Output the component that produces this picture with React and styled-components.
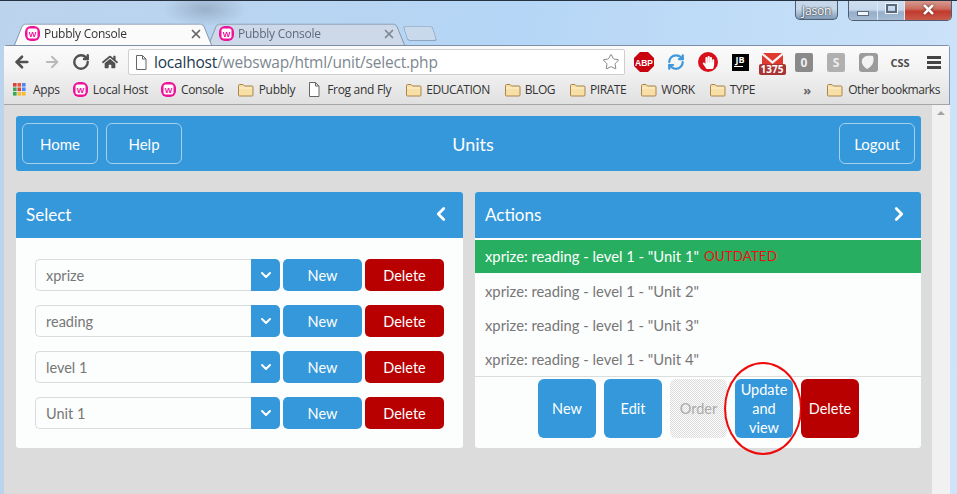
import React from 'react';
import styled, { createGlobalStyle } from 'styled-components';
import { ArrowLeft, ArrowRight, ChevronDown, ChevronLeft, ChevronRight, RefreshCw, RotateCw, Star, X } from 'lucide-react';
import { FaHome, FaHandPaper } from 'react-icons/fa';

const GlobalStyle = createGlobalStyle`
    html, body { margin: 0; padding: 0; background: #c6dcf3; }
    * { box-sizing: border-box; }
`;

const uiFont = `"Open Sans", "Noto Sans", sans-serif`;
const pageFont = `Lato, "Noto Sans", sans-serif`;

const Desktop = styled.div`
    width: 957px;
    height: 494px;
    overflow: hidden;
    display: flex;
    flex-direction: column;
    border-top: 1px solid #26323f;
    background:
        radial-gradient(ellipse 42px 18px at 205px 8px, rgba(120, 135, 155, 0.45), transparent),
        linear-gradient(100deg, #bcd3ec 0%, #b5d6f6 50%, #cfe4f9 100%);
`;

const TitleBar = styled.div`
    height: 44px;
    flex: none;
    display: flex;
    padding-left: 14px;
`;

const TabStrip = styled.div`
    display: flex;
    align-items: flex-end;
`;

const Tab = styled.div`
    position: relative;
    isolation: isolate;
    width: ${(p) => (p.$active ? 198 : 197)}px;
    height: 24px;
    margin-left: ${(p) => (p.$active ? 0 : -4)}px;
    padding: 1px 9px 0 11px;
    display: flex;
    align-items: center;
    gap: 4px;
    z-index: ${(p) => (p.$active ? 2 : 1)};
    font: 12px ${uiFont};
    letter-spacing: -0.25px;
    color: ${(p) => (p.$active ? '#333' : '#5f6b7c')};

    &::before {
        content: '';
        position: absolute;
        inset: 0;
        z-index: -1;
        background: ${(p) => (p.$active ? '#fbfbfb' : '#cdd8e8')};
        border: 1px solid #8296ad;
        border-bottom: none;
        border-radius: 4px 4px 0 0;
        transform: perspective(60px) rotateX(14deg);
        transform-origin: bottom;
    }
`;

const TabTitle = styled.span`
    flex: 1;
`;

const TabClose = styled(X)`
    color: ${(p) => (p.$active ? '#666' : '#7f8894')};
`;

const NewTab = styled.div`
    width: 30px;
    height: 15px;
    margin: 0 0 4px 0;
    background: #c9d9ec;
    border: 1px solid #8fa5bf;
    border-top-color: #a6b8cd;
    border-radius: 3px;
    transform: skewX(18deg);
`;

const WindowButtons = styled.div`
    margin-left: auto;
    margin-right: 5px;
    display: flex;
    align-items: flex-start;
    gap: 10px;
`;

const ProfileChip = styled.div`
    width: 43px;
    height: 19px;
    display: flex;
    align-items: center;
    justify-content: center;
    font: 12px ${uiFont};
    letter-spacing: -0.2px;
    color: #fff;
    text-shadow: 0 0 2px #26323f, 0 0 2px #26323f;
    background: linear-gradient(#c6d7e9 0%, #c6d7e9 45%, #7f99b6 100%);
    border: 1px solid #4f5e70;
    border-top: none;
    border-radius: 0 0 5px 5px;
`;

const Controls = styled.div`
    display: flex;
    height: 20px;
    border: 1px solid #4f5e70;
    border-top: none;
    border-radius: 0 0 5px 5px;
    overflow: hidden;
`;

const Control = styled.div`
    width: ${(p) => p.$w}px;
    display: flex;
    align-items: center;
    justify-content: center;
    border-right: 1px solid #dfe9f3;
    background: ${(p) =>
        p.$close
            ? 'linear-gradient(#d79a92 0%, #cb6d60 40%, #c23b2d 55%, #c95a4c 100%)'
            : 'linear-gradient(#cfdff0 0%, #c6d8ec 45%, #96aec8 60%, #a6bcd4 100%)'};
    &:last-child { border-right: none; }
`;

const MinGlyph = styled.span`
    width: 12px;
    height: 5px;
    margin-top: 6px;
    background: #f2f6fa;
    border: 1px solid #5a6b80;
`;

const MaxGlyph = styled.span`
    width: 11px;
    height: 9px;
    margin-bottom: 4px;
    border: 2px solid #5a6b80;
    box-shadow: 0 0 0 1px #eef3f8;
`;

const CloseGlyph = styled(X)`
    color: #fff;
    margin-bottom: 3px;
    filter: drop-shadow(0 0 1px #5a2018);
`;

const Browser = styled.div`
    flex: 1;
    min-height: 0;
    margin: 0 7px 0 4px;
    display: flex;
    flex-direction: column;
    border-top: 1px solid #7d8ea5;
    border-right: 1px solid #7d9cc0;
    border-radius: 3px 3px 0 0;
    background: #dcdcdc;
`;

const Chrome = styled.div`
    flex: none;
    background: linear-gradient(#fbfbfb 0%, #f3f3f3 40%, #e0e0e0 100%);
    border-bottom: 1px solid #a5a5a5;
`;

const Toolbar = styled.div`
    height: 29px;
    display: flex;
    align-items: center;
    padding: 3px 0 0 3px;
`;

const NavIcon = styled.div`
    width: ${(p) => p.$w || 29}px;
    flex: none;
    display: flex;
    justify-content: center;
    color: ${(p) => (p.$faded ? '#b9b9b9' : '#505050')};
`;

const Omnibox = styled.div`
    width: 497px;
    height: 26px;
    margin: 0 3px 0 4px;
    padding: 0 4px 0 6px;
    flex: none;
    display: flex;
    align-items: center;
    gap: 7px;
    background: #fff;
    border: 1px solid #cfcfcf;
    border-radius: 2px;
    font: 15.5px ${uiFont};
    letter-spacing: -0.2px;
    color: #7d8790;
`;

const Host = styled.span`
    color: #22384f;
`;

const Url = styled.span`
    flex: 1;
`;

const Extensions = styled.div`
    display: flex;
    align-items: center;
`;

const Extension = styled.div`
    width: 32px;
    height: 24px;
    flex: none;
    display: flex;
    align-items: center;
    justify-content: center;
`;

const HandBadge = styled.div`
    width: 20px;
    height: 20px;
    display: flex;
    align-items: center;
    justify-content: center;
    border-radius: 50%;
    background: #d8101c;
    color: #fff;
`;

const JbBadge = styled.div`
    width: 17px;
    height: 17px;
    padding-top: 1px;
    background: #000;
    color: #fff;
    font: bold 9px/9px ${uiFont};
    text-align: center;
    &::after {
        content: '';
        display: block;
        width: 9px;
        height: 1px;
        margin: 2px 0 0 2px;
        background: #fff;
    }
`;

const MailBadge = styled.div`
    position: relative;
    width: 27px;
    height: 24px;
    margin-top: 4px;
`;

const MailCount = styled.span`
    position: absolute;
    left: 0;
    bottom: 1px;
    width: 27px;
    height: 11px;
    background: #a93232;
    border-radius: 2px;
    color: #fff;
    font: bold 10px/11px ${uiFont};
    text-align: center;
`;

const GreyBadge = styled.div`
    width: 18px;
    height: 19px;
    display: flex;
    align-items: center;
    justify-content: center;
    border-radius: 2px;
    background: ${(p) => p.$bg};
    color: #eee;
    font: bold 12px ${uiFont};
`;

const CssBadge = styled.span`
    font: bold 11px ${uiFont};
    color: #4c4c4c;
`;

const MenuBars = styled.div`
    width: 14px;
    margin-left: 3px;
    display: flex;
    flex-direction: column;
    gap: 2px;
    span {
        height: 3px;
        background: #444;
    }
`;

const Bookmarks = styled.div`
    height: 29px;
    padding: 0 9px 0 9px;
    display: flex;
    align-items: center;
    font: 12px ${uiFont};
    color: #333;
`;

const Bookmark = styled.div`
    display: flex;
    align-items: center;
    gap: ${(p) => p.$gap || 5}px;
    margin-right: ${(p) => p.$after || 13}px;
    white-space: nowrap;
    letter-spacing: ${(p) => (p.$tight ? -0.45 : -0.3)}px;
    &:last-child { margin-right: 0; }
`;

const Overflow = styled.span`
    margin: 0 15px 0 auto;
    font: bold 13px ${uiFont};
    color: #666;
`;

const Viewport = styled.div`
    flex: 1;
    min-height: 0;
    display: flex;
`;

const Page = styled.main`
    flex: 1;
    padding: 11px 11px 0 12px;
    font-family: ${pageFont};
    color: #fff;
`;

const Scrollbar = styled.div`
    width: 18px;
    flex: none;
    padding-top: 6px;
    display: flex;
    justify-content: center;
    background: #f1f1f1;
    &::before {
        content: '';
        width: 0;
        height: 0;
        border: 4px solid transparent;
        border-top: none;
        border-bottom: 4px solid #a3a3a3;
    }
`;

const TopBar = styled.header`
    height: 55px;
    margin-bottom: 21px;
    padding: 0 6px;
    display: grid;
    grid-template-columns: 1fr auto 1fr;
    align-items: center;
    background: #3498db;
    border-radius: 3px;
`;

const NavGroup = styled.nav`
    display: flex;
    gap: 8px;
    justify-content: ${(p) => (p.$end ? 'flex-end' : 'flex-start')};
`;

const NavButton = styled.button`
    width: 76px;
    height: 41px;
    padding: 0;
    background: transparent;
    border: 1px solid #a6d0ef;
    border-radius: 6px;
    color: #fff;
    font: 15px ${pageFont};
`;

const PageTitle = styled.h1`
    margin: 0 0 0 9px;
    font: 400 18px ${pageFont};
`;

const Panels = styled.div`
    display: grid;
    grid-template-columns: 447px 446px;
    gap: 12px;
`;

const Panel = styled.section`
    background: #fcfdfd;
    border-radius: 3px;
    color: #777;
    display: flex;
    flex-direction: column;
`;

const PanelHead = styled.div`
    height: 46px;
    padding: 0 11px 2px 10px;
    display: flex;
    align-items: center;
    justify-content: space-between;
    background: #3498db;
    border-radius: 3px 3px 0 0;
    color: #fff;
    font: 17px ${pageFont};
`;

const SelectBody = styled.div`
    flex: 1;
    padding: 21px 19px 19px;
    display: flex;
    flex-direction: column;
    gap: 14px;
`;

const SelectRow = styled.div`
    height: 32px;
    display: flex;
`;

const SelectField = styled.div`
    flex: 1;
    display: flex;
    align-items: center;
    padding-left: 10px;
    border: 1px solid #d8dcdc;
    border-right: none;
    border-radius: 5px 0 0 5px;
    background: #fcfdfd;
    font-size: 14.5px;
    color: #777;
`;

const SelectArrow = styled.div`
    width: 29px;
    display: flex;
    align-items: center;
    justify-content: center;
    background: #3498db;
    border-radius: 0 5px 5px 0;
    color: #fff;
`;

const RowButton = styled.button`
    width: 79px;
    margin-left: 3px;
    padding: 0;
    border: none;
    border-radius: 5px;
    background: ${(p) => (p.$danger ? '#b80000' : '#3498db')};
    color: #fff;
    font: 14.5px ${pageFont};
`;

const UnitList = styled.ul`
    margin: 2px 0 0;
    padding: 0;
    list-style: none;
`;

const UnitItem = styled.li`
    height: ${(p) => (p.$active ? 33 : 34)}px;
    margin-bottom: ${(p) => (p.$active ? 1 : 0)}px;
    padding: 0 0 1px 10px;
    display: flex;
    align-items: center;
    gap: 5px;
    font-size: 14.8px;
    white-space: pre;
    color: ${(p) => (p.$active ? '#fff' : '#777')};
    background: ${(p) => (p.$active ? '#27ae60' : 'transparent')};
`;

const Outdated = styled.span`
    font-size: 13.5px;
    color: #f01010;
`;

const ActionBar = styled.div`
    flex: 1;
    padding: 2px 0 0 1px;
    display: flex;
    justify-content: center;
    align-items: flex-start;
    gap: 8px;
    border-top: 1px solid #dcdddd;
`;

const ActionButton = styled.button`
    position: relative;
    width: 58px;
    height: 59px;
    padding: 0;
    border: none;
    border-radius: 6px;
    background: ${(p) => (p.$danger ? '#b80000' : '#3498db')};
    color: #fff;
    font: 14.5px/19px ${pageFont};

    &:disabled {
        width: 57px;
        color: #aaa;
        background: repeating-conic-gradient(#dcdcdc 0 25%, #fcfcfc 0 50%) 0 0 / 2px 2px;
    }
`;

const Annotation = styled.span`
    position: absolute;
    left: -11px;
    top: -17px;
    width: 78px;
    height: 93px;
    border: 2px solid #ee0b0b;
    border-radius: 50%;
    pointer-events: none;
`;

const Favicon = () => (
    <svg width="15" height="15" viewBox="0 0 15 15">
        <rect width="15" height="15" rx="6" fill="#ee1199" />
        <rect x="2.5" y="2.5" width="10" height="10" rx="2" fill="#fff" />
        <text x="7.5" y="10.5" textAnchor="middle" fontSize="8" fontWeight="700" fontFamily="Liberation Sans, sans-serif" fill="#ee1199">W</text>
    </svg>
);

const FolderIcon = () => (
    <svg width="17" height="15" viewBox="0 0 17 15">
        <path d="M1.5 3.5 a1 1 0 0 1 1-1 h3.5 l1.5 1.5 h7.5 a1 1 0 0 1 1 1 v8 a1 1 0 0 1-1 1 h-12.5 a1 1 0 0 1-1-1 z" fill="#f7dfa5" stroke="#a8854f" />
        <path d="M2 6 h13" stroke="#fdf3d6" />
    </svg>
);

const PageIcon = () => (
    <svg width="12" height="15" viewBox="0 0 12 15">
        <path d="M1.5 .5 h6 l3.5 3.5 v10.5 h-9.5 z M7.5 .5 v3.5 h3.5" fill="#fff" stroke="#666" />
    </svg>
);

const AppsIcon = () => {
    const colors = ['#d9453c', '#e8553f', '#4a8af4', '#3aa757', '#d9453c', '#4a8af4', '#3aa757', '#f9bb2d', '#f9bb2d'];
    return (
        <svg width="13" height="13" viewBox="0 0 13 13">
            {colors.map((c, i) => (
                <rect key={i} x={(i % 3) * 4.5} y={Math.floor(i / 3) * 4.5} width="3.6" height="3.6" fill={c} />
            ))}
        </svg>
    );
};

const AbpIcon = () => (
    <svg width="20" height="20" viewBox="0 0 20 20">
        <polygon points="6,0 14,0 20,6 20,14 14,20 6,20 0,14 0,6" fill="#c8000f" />
        <text x="10" y="13.5" textAnchor="middle" fontSize="8.5" fontWeight="700" fontFamily="Liberation Sans, sans-serif" fill="#fff">ABP</text>
    </svg>
);

const MailIcon = () => (
    <svg width="27" height="15" viewBox="0 0 27 15">
        <path d="M4 1 h19 l-9.5 8 z" fill="#e03a30" />
        <path d="M3 3 l10.5 9 l10.5 -9 v12 h-21 z" fill="#e03a30" />
    </svg>
);

const ShieldIcon = () => (
    <svg width="19" height="19" viewBox="0 0 19 19">
        <rect width="19" height="19" rx="3" fill="#9b9b9b" />
        <path d="M3 7 C4 3 9 2 14 3 C16 8 13 14 8 16 C5 14 2 11 3 7 z" fill="#f2f2f2" />
    </svg>
);

const selectRows = ['xprize', 'reading', 'level 1', 'Unit 1'];
const units = ['Unit 2', 'Unit 3', 'Unit 4'];
const folders = ['EDUCATION', 'BLOG', 'PIRATE', 'WORK', 'TYPE'];

const App = () => {
    return (
        <Desktop>
            <GlobalStyle />
            <TitleBar>
                <TabStrip>
                    <Tab $active>
                        <Favicon />
                        <TabTitle>Pubbly Console</TabTitle>
                        <TabClose $active size={14} strokeWidth={3} />
                    </Tab>
                    <Tab>
                        <Favicon />
                        <TabTitle>Pubbly Console</TabTitle>
                        <TabClose size={14} strokeWidth={3} />
                    </Tab>
                    <NewTab />
                </TabStrip>
                <WindowButtons>
                    <ProfileChip>Jason</ProfileChip>
                    <Controls>
                        <Control $w={29}><MinGlyph /></Control>
                        <Control $w={27}><MaxGlyph /></Control>
                        <Control $w={46} $close><CloseGlyph size={15} strokeWidth={4} /></Control>
                    </Controls>
                </WindowButtons>
            </TitleBar>
            <Browser>
                <Chrome>
                    <Toolbar>
                        <NavIcon $w={30}><ArrowLeft size={18} strokeWidth={3.5} /></NavIcon>
                        <NavIcon $faded><ArrowRight size={18} strokeWidth={2.5} /></NavIcon>
                        <NavIcon><RotateCw size={18} strokeWidth={3.2} /></NavIcon>
                        <NavIcon><FaHome size={16} /></NavIcon>
                        <Omnibox>
                            <PageIcon />
                            <Url><Host>localhost</Host>/webswap/html/unit/select.php</Url>
                            <Star size={18} strokeWidth={1.2} color="#777" />
                        </Omnibox>
                        <Extensions>
                            <Extension><AbpIcon /></Extension>
                            <Extension><RefreshCw size={18} strokeWidth={3} color="#3f97dc" /></Extension>
                            <Extension><HandBadge><FaHandPaper size={13} /></HandBadge></Extension>
                            <Extension><JbBadge>JB</JbBadge></Extension>
                            <Extension>
                                <MailBadge>
                                    <MailIcon />
                                    <MailCount>1375</MailCount>
                                </MailBadge>
                            </Extension>
                            <Extension><GreyBadge $bg="#8a8a8a">0</GreyBadge></Extension>
                            <Extension><GreyBadge $bg="#b0b0b0">S</GreyBadge></Extension>
                            <Extension><ShieldIcon /></Extension>
                            <Extension><CssBadge>CSS</CssBadge></Extension>
                            <Extension><MenuBars><span /><span /><span /></MenuBars></Extension>
                        </Extensions>
                    </Toolbar>
                    <Bookmarks>
                        <Bookmark $gap={7}><AppsIcon />Apps</Bookmark>
                        <Bookmark><Favicon />Local Host</Bookmark>
                        <Bookmark><Favicon />Console</Bookmark>
                        <Bookmark><FolderIcon />Pubbly</Bookmark>
                        <Bookmark $gap={7} $after={14}><PageIcon />Frog and Fly</Bookmark>
                        {folders.map((name) => (
                            <Bookmark key={name} $gap={4} $after={14} $tight><FolderIcon />{name}</Bookmark>
                        ))}
                        <Overflow>»</Overflow>
                        <Bookmark $tight><FolderIcon />Other bookmarks</Bookmark>
                    </Bookmarks>
                </Chrome>
                <Viewport>
                    <Page>
                        <TopBar>
                            <NavGroup>
                                <NavButton>Home</NavButton>
                                <NavButton>Help</NavButton>
                            </NavGroup>
                            <PageTitle>Units</PageTitle>
                            <NavGroup $end>
                                <NavButton>Logout</NavButton>
                            </NavGroup>
                        </TopBar>
                        <Panels>
                            <Panel>
                                <PanelHead>Select<ChevronLeft size={22} strokeWidth={3} /></PanelHead>
                                <SelectBody>
                                    {selectRows.map((value) => (
                                        <SelectRow key={value}>
                                            <SelectField>{value}</SelectField>
                                            <SelectArrow><ChevronDown size={16} strokeWidth={3} /></SelectArrow>
                                            <RowButton>New</RowButton>
                                            <RowButton $danger>Delete</RowButton>
                                        </SelectRow>
                                    ))}
                                </SelectBody>
                            </Panel>
                            <Panel>
                                <PanelHead>Actions<ChevronRight size={22} strokeWidth={3} /></PanelHead>
                                <UnitList>
                                    <UnitItem $active>xprize: reading - level 1 - "Unit 1"<Outdated>OUTDATED</Outdated></UnitItem>
                                    {units.map((unit) => (
                                        <UnitItem key={unit}>xprize: reading - level 1 - "{unit}"</UnitItem>
                                    ))}
                                </UnitList>
                                <ActionBar>
                                    <ActionButton>New</ActionButton>
                                    <ActionButton>Edit</ActionButton>
                                    <ActionButton disabled>Order</ActionButton>
                                    <ActionButton>Update<br />and<br />view<Annotation /></ActionButton>
                                    <ActionButton $danger>Delete</ActionButton>
                                </ActionBar>
                            </Panel>
                        </Panels>
                    </Page>
                    <Scrollbar />
                </Viewport>
            </Browser>
        </Desktop>
    );
};

export default App;
